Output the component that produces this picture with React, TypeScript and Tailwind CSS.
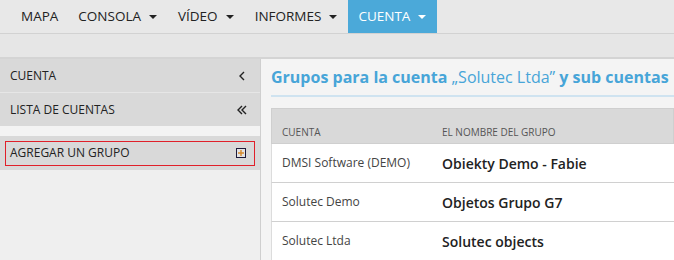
import React from 'react'

const font = { fontFamily: '"Open Sans", "Noto Sans", sans-serif' }

const navItems = [
  { label: 'MAPA', caret: false },
  { label: 'CONSOLA', caret: true },
  { label: 'VÍDEO', caret: true },
  { label: 'INFORMES', caret: true },
  { label: 'CUENTA', caret: true, active: true }
]

const rows = [
  { account: 'DMSI Software (DEMO)', group: 'Obiekty Demo - Fabie' },
  { account: 'Solutec Demo', group: 'Objetos Grupo G7' },
  { account: 'Solutec Ltda', group: 'Solutec objects' }
]

const Caret = ({ light }: { light?: boolean }) => (
  <span
    className={`ml-[8px] inline-block h-0 w-0 border-x-[4px] border-t-[4px] border-x-transparent ${
      light ? 'border-t-white' : 'border-t-[#222]'
    }`}
  />
)

const App = () => {
  return (
    <div className="h-[260px] w-[674px] overflow-hidden bg-[#e8e8e8]" style={font}>
      {/* top nav */}
      <div className="flex h-[34px] border-b border-[#d2d2d2] pl-[11px]">
        {navItems.map((item) => (
          <div
            key={item.label}
            className={`flex h-[33px] items-center pl-[10px] text-[13.5px] ${
              item.caret ? 'pr-[11px]' : 'pr-[10px]'
            } ${item.active ? 'bg-[#4ba9d9] text-white' : 'text-[#222]'}`}
          >
            {item.label}
            {item.caret && <Caret light={item.active} />}
          </div>
        ))}
      </div>

      {/* sub band */}
      <div className="h-[25px] border-b-2 border-[#d4d4d4] bg-[#e6e6e6]" />

      <div className="flex">
        {/* sidebar */}
        <div className="w-[261px] shrink-0 border-r border-[#cfcfcf] bg-[#efefef]">
          <div className="flex h-[34px] items-center justify-between border-b border-[#e6e6e6] bg-[#d9d9d9] pl-[10px] pr-[14px] text-[12px] text-[#222]">
            <span>CUENTA</span>
            <svg width="8" height="10" viewBox="0 0 8 10">
              <path d="M6 1 L2 5 L6 9" fill="none" stroke="#222" strokeWidth="1.4" />
            </svg>
          </div>
          <div className="flex h-[33px] items-center justify-between bg-[#d9d9d9] pl-[10px] pr-[12px] text-[12px] text-[#222]">
            <span>LISTA DE CUENTAS</span>
            <svg width="12" height="10" viewBox="0 0 12 10">
              <path d="M6 1 L2 5 L6 9 M10 1 L6 5 L10 9" fill="none" stroke="#222" strokeWidth="1.4" />
            </svg>
          </div>
          <div className="h-[10px] bg-[#f3f3f3]" />
          <div className="flex h-[34px] items-center bg-[#d9d9d9] px-[5px]">
            <div className="flex h-[25px] w-full items-center justify-between border border-[#e0202a] pl-[4px] pr-[8px] text-[12px] text-[#222]">
              <span>AGREGAR UN GRUPO</span>
              <span className="flex h-[10px] w-[10px] items-center justify-center border border-[#1e1b3a] bg-[#e4e4e4]">
                <svg width="6" height="6" viewBox="0 0 6 6">
                  <path d="M3 0 V6 M0 3 H6" stroke="#d68a2c" strokeWidth="1.4" />
                </svg>
              </span>
            </div>
          </div>
        </div>

        {/* main */}
        <div className="flex-1 bg-[#f4f4f4] pl-[10px]">
          <div className="flex h-[38px] items-center border-b-2 border-[#cfe3f0] text-[16px] font-bold text-[#47a5d8] whitespace-nowrap">
            <span>
              Grupos para la cuenta <span className="font-normal">„Solutec Ltda”</span> y sub cuentas
            </span>
          </div>
          <div className="mt-[11px] bg-white">
            <div className="flex h-[36px] items-end border border-[#cfcfcf] bg-[#d9d9d9] pb-[3px] text-[10px] text-[#555]">
              <div className="w-[170px] pl-[10px]">CUENTA</div>
              <div>EL NOMBRE DEL GRUPO</div>
            </div>
            {rows.map((r) => (
              <div
                key={r.account}
                className="flex h-[39px] items-center border-b border-[#d0d0d0] border-l border-l-[#dcdcdc]"
              >
                <div className="w-[170px] pl-[10px] text-[12px] text-[#444]">{r.account}</div>
                <div className="text-[14px] font-semibold text-[#222]">{r.group}</div>
              </div>
            ))}
          </div>
        </div>
      </div>
    </div>
  )
}

export default App
